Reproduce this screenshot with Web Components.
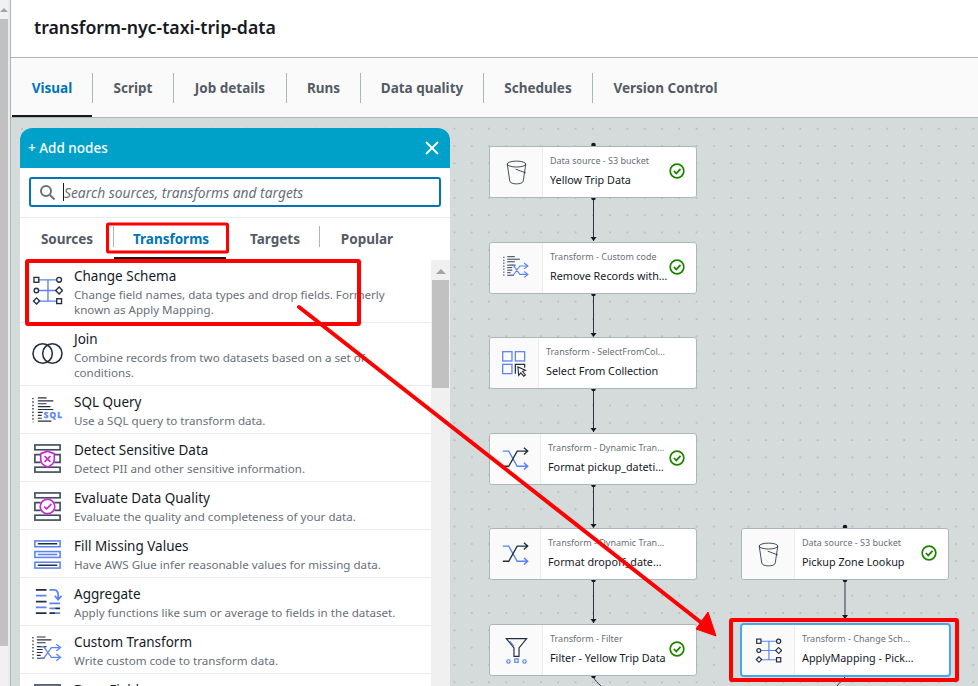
<!DOCTYPE html>
<html>
<head>
<meta charset="utf-8">
<style>
html,body{margin:0;padding:0;height:100%;overflow:hidden;background:#fff}
body{font-family:"Noto Sans","Open Sans",sans-serif;color:#16191f}
</style>
</head>
<body>
<glue-page></glue-page>

<template id="icons">
  <svg data-i="schema" viewBox="0 0 32 32" fill="none" stroke="#232f3e" stroke-width="1.4"><path d="M6 5H26M6 16H26M6 27H26M16.500 5V27" stroke="#5a82f5"/><rect x="2" y="2.500" width="5" height="5" fill="#fff"/><circle cx="28" cy="5" r="2.500" fill="#fff"/><circle cx="4.500" cy="16" r="2.300" fill="#fff"/><rect x="25.500" y="13.500" width="5" height="5" transform="rotate(45 28 16)" fill="#fff"/><rect x="2.500" y="24.500" width="4.500" height="4.500" transform="rotate(45 4.700 26.700)" fill="#fff"/><rect x="25.500" y="24.500" width="5" height="5" fill="#fff"/></svg>
  <svg data-i="join" viewBox="0 0 32 32" fill="none" stroke="#232f3e" stroke-width="1.600"><circle cx="11" cy="16" r="10"/><circle cx="21" cy="16" r="10"/></svg>
  <svg data-i="sql" viewBox="0 0 32 32" fill="none" stroke="#232f3e" stroke-width="1.200"><path d="M1 3V28" stroke-dasharray="1.500 2" stroke-width="1.400"/><path d="M6 3H15M6 6H22M6 9H15M6 12H19M6 15H22M6 18H11M6 21H10M6 24H10M6 27H20"/><text x="12" y="24" font-family="Noto Sans" font-size="8.500" font-weight="700" letter-spacing="1.300" fill="#5a82f5" stroke="#5a82f5" stroke-width=".4">SQL</text></svg>
  <svg data-i="detect" viewBox="0 0 32 32" fill="none" stroke="#414d5c" stroke-width="1.700"><rect x="3" y="2" width="26" height="5"/><rect x="3" y="25" width="26" height="5"/><path d="M9 12H3V20H9M23 12H29V20H23"/><path d="M16 8.500 23 11V17C23 21 19.500 23.500 16 25 12.500 23.500 9 21 9 17V11Z" fill="#fff" stroke="#c925d1"/><path d="M13 13.500 19 19.500M19 13.500 13 19.500" stroke="#c925d1"/></svg>
  <svg data-i="quality" viewBox="0 0 32 32" fill="none" stroke="#414d5c" stroke-width="1.700"><rect x="3" y="2" width="26" height="5"/><rect x="3" y="25" width="26" height="5"/><path d="M9 12H3V20H9M23 12H29V20H23"/><circle cx="16" cy="16" r="7.500" fill="#fff" stroke="#c925d1"/><path d="M12.500 16 15 18.500 20 13.500" stroke="#c925d1"/></svg>
  <svg data-i="fill" viewBox="0 0 32 32" fill="none" stroke="#5a82f5" stroke-width="1.600"><rect x="3" y="2" width="26" height="6"/><rect x="3" y="13" width="26" height="6"/><rect x="3" y="24" width="26" height="6"/><path d="M6 5H26M6 27H26" stroke="#232f3e"/><path d="M6 16H26"/></svg>
  <svg data-i="aggregate" viewBox="0 0 32 32" fill="none" stroke-width="1.800"><path d="M4 3H15M4 15H15M4 27H15" stroke="#232f3e"/><path d="M4 9H15M4 21H15" stroke="#5a82f5"/><path d="M18 3H23C26 3 27 5 27 9V13M23.500 9 27 13 30.500 9" stroke="#5a82f5"/><path d="M18 17H29M18 22H24M24 27H29" stroke="#5a82f5"/><path d="M24 22H29M18 27H24" stroke="#232f3e"/></svg>
  <svg data-i="custom" viewBox="0 0 32 32" fill="none" stroke="#232f3e" stroke-width="1.100"><path d="M1 2V26" stroke-dasharray="1.500 2" stroke-width="1.300"/><path d="M5 2H14M5 5H20M5 8H14M5 12H15M5 15H11M5 18H11M5 21H9M5 24H13"/><path d="M9 12H12L20 23H28M9 24H12L20 13H28M25 9.500 29.500 13 25 16.500M25 19.500 29.500 23 25 26.500" stroke="#5a82f5" stroke-width="1.300"/></svg>
  <svg data-i="shuffle" viewBox="0 0 32 32" fill="none" stroke="#5a82f5" stroke-width="1.600"><path d="M1 6H8L18 24H30M26 20 30.500 24 26 28"/><path d="M1 24H8L18 6H30M26 2 30.500 6 26 10" stroke="#232f3e"/></svg>
  <svg data-i="bucket" viewBox="0 0 32 32" fill="none" stroke="#232f3e" stroke-width="1"><ellipse cx="16" cy="6" rx="11" ry="3.500"/><path d="M5 6 8 26C8.500 28.500 12 29.500 16 29.500 20 29.500 23.500 28.500 24 26L27 6M15 12 27 16.500"/></svg>
  <svg data-i="select" viewBox="0 0 32 32" fill="none" stroke="#5a82f5" stroke-width="1.500"><rect x="2" y="2" width="11" height="11"/><rect x="17" y="2" width="11" height="11"/><rect x="2" y="17" width="11" height="11"/><path d="M17 28V17H28V21" stroke="#232f3e"/><path d="M20 20 21 30 23.500 27 27 31 29 29.500 25.500 25.500 29 24Z" fill="#fff" stroke="#232f3e" stroke-width="1.300"/></svg>
  <svg data-i="filter" viewBox="0 0 32 32" fill="none" stroke="#232f3e" stroke-width="1.400"><path d="M4 2H28L19 13V23H13V13Z"/><path d="M8 5 13 11" stroke="#5a82f5"/><circle cx="6.500" cy="29" r="2" stroke="#5a82f5"/><rect x="14" y="26" width="4" height="4" stroke="#5a82f5"/><circle cx="25.500" cy="29" r="2" stroke="#5a82f5"/></svg>
</template>

<script>
// icon lookup, clones from the shared template into a shadow root
function icon(name) {
  var tpl = document.getElementById('icons');
  return tpl.content.querySelector('[data-i="' + name + '"]').outerHTML;
}

class GlueTabs extends HTMLElement {
  constructor() {
    super();
    this.attachShadow({ mode: 'open' });
  }
  connectedCallback() {
    var tabs = [['Visual', 81], ['Script', 81], ['Job details', 113], ['Runs', 74], ['Data quality', 123], ['Schedules', 109], ['Version Control', 146]];
    this.shadowRoot.innerHTML = `
      <style>
:host{display:flex;height:59px;background:#fafafa;border-bottom:1px solid #aab7b8;box-sizing:content-box;font-size:13.500px;font-weight:700;color:#545b64}
.t{position:relative;display:flex;align-items:center;justify-content:center;height:100%;padding-left:1px;box-sizing:border-box}
.t+.t::before{content:'';position:absolute;left:0;top:15px;height:30px;width:1px;background:#aab7b8}
.t.on{color:#0073bb}
.t.on::after{content:'';position:absolute;left:1px;right:0;bottom:0;height:2px;background:#16191f}
      </style>
      ${tabs.map(function (t, i) { return '<div class="t' + (i ? '' : ' on') + '" style="width:' + t[1] + 'px">' + t[0] + '</div>'; }).join('')}
    `;
  }
}

class GlueTransform extends HTMLElement {
  constructor() {
    super();
    this.attachShadow({ mode: 'open' });
  }
  connectedCallback() {
    var h = this.getAttribute('h') || 48;
    this.shadowRoot.innerHTML = `
      <style>
:host{display:block;height:${h}px;box-sizing:border-box;border-bottom:1px solid #eaeded;position:relative;padding:7px 0 0 54px;overflow:hidden}
svg{position:absolute;left:12px;top:${h > 50 ? 15 : 9}px;width:31px;height:31px}
.n{font-size:13.500px;line-height:18px;color:#16191f}
.d{font-size:11.600px;line-height:15px;color:#687078;margin-top:2px;white-space:nowrap}
      </style>
      ${icon(this.getAttribute('icon'))}
      <div class="n">${this.getAttribute('name')}</div>
      <div class="d"><slot></slot></div>
    `;
  }
}

class GlueAddNodes extends HTMLElement {
  constructor() {
    super();
    this.attachShadow({ mode: 'open' });
  }
  connectedCallback() {
    this.shadowRoot.innerHTML = `
      <style>
:host{display:flex;flex-direction:column;width:430px;height:558px;background:#fff;border-radius:12px 12px 0 0;overflow:hidden;position:relative}
.head{flex:none;height:40px;background:#00a1c9;color:#fff;display:flex;align-items:center;justify-content:space-between;padding:0 10px 0 8px;font-size:13.500px;font-weight:500}
.head svg{width:16px;height:16px;display:block}
.search{flex:none;padding:9px 9px 10px;border-bottom:1px solid #eaeded}
.box{height:30px;box-sizing:border-box;border:2px solid #0073bb;border-radius:3px;display:flex;align-items:center;padding-left:8px;gap:7px;font-size:13.800px;font-style:italic;color:#687078}
.box svg{width:17px;height:17px;flex:none}
.box i{width:1px;height:18px;background:#16191f;margin-right:-7px;flex:none}
.cats{flex:none;height:41px;display:flex;font-size:13.500px;font-weight:700;color:#545b64;position:relative}
.cat{position:relative;display:flex;align-items:center;justify-content:center;box-sizing:border-box}
.cat.on{color:#0073bb}
.cat.on::after{content:'';position:absolute;left:1px;right:1px;bottom:0;height:2px;background:#16191f}
.cat.sep::before{content:'';position:absolute;left:0;top:8px;height:21px;width:1px;background:#aab7b8}
.body{flex:1;min-height:0;display:flex;margin-top:1px;overflow:hidden}
.list{flex:1;min-width:0;overflow:hidden}
.bar{flex:none;width:19px;background:#f0f0f0;position:relative}
.bar b{position:absolute;left:1px;right:1px;top:20px;height:108px;background:#c1c1c1}
.bar u{position:absolute;left:5px;top:9px;border:5px solid transparent;border-top:0;border-bottom:5px solid #a3a3a3}
      </style>
      <div class="head"><span>+ Add nodes</span><svg viewBox="0 0 16 16" fill="none" stroke="#fff" stroke-width="1.800"><path d="M2 2 14 14M14 2 2 14"/></svg></div>
      <div class="search"><div class="box"><svg viewBox="0 0 17 17" fill="none" stroke="#687078" stroke-width="2"><circle cx="7" cy="7" r="5"/><path d="M11 11 15.500 15.500"/></svg><i></i><span>Search sources, transforms and targets</span></div></div>
      <div class="cats">
        <div class="cat" style="width:93px;padding-left:1px">Sources</div>
        <div class="cat on sep" style="width:114px;padding-left:2px">Transforms</div>
        <div class="cat" style="width:92px;padding-left:4px">Targets</div>
        <div class="cat sep" style="width:94px;padding-left:2px">Popular</div>
      </div>
      <div class="body"><div class="list"><slot></slot></div><div class="bar"><u></u><b></b></div></div>
    `;
  }
}

class GlueNode extends HTMLElement {
  constructor() {
    super();
    this.attachShadow({ mode: 'open' });
  }
  connectedCallback() {
    var a = this.getAttribute.bind(this);
    var ok = this.hasAttribute('ok');
    this.shadowRoot.innerHTML = `
      <style>
:host{position:absolute;left:${a('x')}px;top:${a('y')}px;width:208px;height:52px;box-sizing:border-box;display:flex;background:#fff;border:1px solid #aab7b8;border-radius:3px;z-index:2}
:host([sel]){border:2px solid #44a8ee;border-radius:4px;width:211px;height:54px}
.ic{flex:none;width:${a('ic') || 52}px;background:#fafafa;border-right:1px solid #eaeded;border-radius:3px 0 0 3px;display:flex;align-items:center;justify-content:center}
.ic svg{width:27px;height:27px}
.tx{flex:1;min-width:0;padding:7px 0 0 7px;position:relative}
.k{font-size:9px;line-height:13px;color:#687078;white-space:nowrap}
.v{font-size:10.800px;line-height:15px;margin-top:5px;color:#16191f;white-space:nowrap}
.ok{position:absolute;right:11px;top:16px;width:16px;height:16px}
      </style>
      <div class="ic">${icon(a('icon'))}</div>
      <div class="tx">
        <div class="k">${a('kind')}</div>
        <div class="v">${a('name')}</div>
        ${ok ? '<svg class="ok" viewBox="0 0 15 15" fill="none" stroke="#1d8102" stroke-width="1.600"><circle cx="7.500" cy="7.500" r="6.400"/><path d="M4.500 7.500 6.800 9.800 10.800 5.500"/></svg>' : ''}
      </div>
    `;
  }
}

class GlueCanvas extends HTMLElement {
  constructor() {
    super();
    this.attachShadow({ mode: 'open' });
  }
  connectedCallback() {
    this.shadowRoot.innerHTML = `
      <style>
:host{display:block;position:relative;flex:1;min-height:0;overflow:hidden;padding:10px 0 0 9px;
  background-color:#d5dbdb;
  background-image:radial-gradient(circle at 1px 1px,#a3aeb0 0.5px,transparent 0.9px);
  background-size:17.300px 17.300px;background-position:10px 9.700px}
svg.wires{position:absolute;left:0;top:0;width:967px;height:568px;z-index:1}
      </style>
      <svg class="wires" viewBox="0 1 967 568" fill="none">
        <g stroke="#2b3440" stroke-width="1"><path d="M582.500 83V124M582.500 178V219M582.500 274V315M582.500 369V410M582.500 464V506M834 438V500"/><path d="M582.500 560C584 564 587 566 590 569"/><path d="M834 560C832 563 829 565 826 569"/></g>
        <g fill="#16191f"><circle cx="582.500" cy="28" r="2.300"/><circle cx="582.500" cy="81" r="2.300"/><circle cx="582.500" cy="177" r="2.300"/><circle cx="582.500" cy="272" r="2.300"/><circle cx="582.500" cy="368" r="2.300"/><circle cx="582.500" cy="463" r="2.300"/><circle cx="582.500" cy="559" r="2.300"/><circle cx="834" cy="463" r="2.300"/><circle cx="834" cy="410" r="2.300"/>
          <path d="M579.500 120H585.500L582.500 124ZM579.500 216H585.500L582.500 220ZM579.500 311H585.500L582.500 315ZM579.500 407H585.500L582.500 411ZM579.500 502H585.500L582.500 506ZM831 498H837L834 502Z"/>
        </g>
      </svg>
      <slot></slot>
    `;
  }
}

class GluePage extends HTMLElement {
  constructor() {
    super();
    this.attachShadow({ mode: 'open' });
  }
  connectedCallback() {
    this.shadowRoot.innerHTML = `
      <style>
:host{display:flex;width:978px;height:686px;overflow:hidden;position:relative;font-family:"Noto Sans","Open Sans",sans-serif}
.sb{flex:none;width:8px;background:#f1f1f1;position:relative}
.sb b{position:absolute;left:0;right:0;top:19px;height:627px;background:#c1c1c1}
.sb u{position:absolute;left:0;top:8px;border:4px solid transparent;border-top:0;border-bottom:4px solid #a3a3a3}
.gut{flex:none;width:2px;background:#e8ecec;border-right:1px solid #aab7b8}
.main{flex:1;min-width:0;display:flex;flex-direction:column}
.title{flex:none;height:58px;box-sizing:border-box;border-bottom:1px solid #aab7b8;padding:15px 0 0 23px;font-size:17.700px;line-height:24px;font-weight:600;color:#16191f}
svg.marks{position:absolute;left:0;top:0;width:978px;height:686px;z-index:5;pointer-events:none}
      </style>
      <div class="sb"><u></u><b></b></div><div class="gut"></div>
      <div class="main">
        <div class="title">transform-nyc-taxi-trip-data</div>
        <glue-tabs></glue-tabs>
        <glue-canvas>
          <glue-add-nodes>
            <glue-transform h="63" icon="schema" name="Change Schema">Change field names, data types and drop fields. Formerly<br>known as Apply Mapping.</glue-transform>
            <glue-transform h="63" icon="join" name="Join">Combine records from two datasets based on a set of<br>conditions.</glue-transform>
            <glue-transform icon="sql" name="SQL Query">Use a SQL query to transform data.</glue-transform>
            <glue-transform icon="detect" name="Detect Sensitive Data">Detect PII and other sensitive information.</glue-transform>
            <glue-transform icon="quality" name="Evaluate Data Quality">Evaluate the quality and completeness of your data.</glue-transform>
            <glue-transform icon="fill" name="Fill Missing Values">Have AWS Glue infer reasonable values for missing data.</glue-transform>
            <glue-transform icon="aggregate" name="Aggregate">Apply functions like sum or average to fields in the dataset.</glue-transform>
            <glue-transform icon="custom" name="Custom Transform">Write custom code to transform data.</glue-transform>
            <glue-transform icon="detect" name="Drop Fields">Remove selected fields.</glue-transform>
          </glue-add-nodes>
          <glue-node x="478" y="28" ok icon="bucket" kind="Data source - S3 bucket" name="Yellow Trip Data"></glue-node>
          <glue-node x="478" y="124" ok icon="custom" kind="Transform - Custom code" name="Remove Records with…"></glue-node>
          <glue-node x="478" y="219" ic="48" icon="select" kind="Transform - SelectFromCol…" name="Select From Collection"></glue-node>
          <glue-node x="478" y="315" ic="50" ok icon="shuffle" kind="Transform - Dynamic Tran…" name="Format pickup_dateti…"></glue-node>
          <glue-node x="478" y="410" ic="50" icon="shuffle" kind="Transform - Dynamic Tran…" name="Format dropoff_date…"></glue-node>
          <glue-node x="478" y="506" ok icon="filter" kind="Transform - Filter" name="Filter - Yellow Trip Data"></glue-node>
          <glue-node x="730" y="410" ok icon="bucket" kind="Data source - S3 bucket" name="Pickup Zone Lookup"></glue-node>
          <glue-node x="729" y="505" sel ic="52" icon="schema" kind="Transform - Change Sch…" name="ApplyMapping - Pick…"></glue-node>
        </glue-canvas>
      </div>
      <svg class="marks" viewBox="0 0 978 686" fill="none" stroke="#fe0000">
        <rect x="107.500" y="224" width="120" height="28" rx="1" stroke-width="3"/>
        <rect x="27" y="261" width="332" height="63" rx="1" stroke-width="4"/>
        <rect x="731" y="620" width="226" height="60" rx="1" stroke-width="4"/>
        <path d="M299 307 703 624" stroke-width="4" stroke-linecap="round"/>
        <path d="M716 636 696 629 708 612Z" fill="#fe0000" stroke-width="1"/>
      </svg>
    `;
  }
}

customElements.define('glue-tabs', GlueTabs);
customElements.define('glue-transform', GlueTransform);
customElements.define('glue-add-nodes', GlueAddNodes);
customElements.define('glue-node', GlueNode);
customElements.define('glue-canvas', GlueCanvas);
customElements.define('glue-page', GluePage);
</script>
</body>
</html>
